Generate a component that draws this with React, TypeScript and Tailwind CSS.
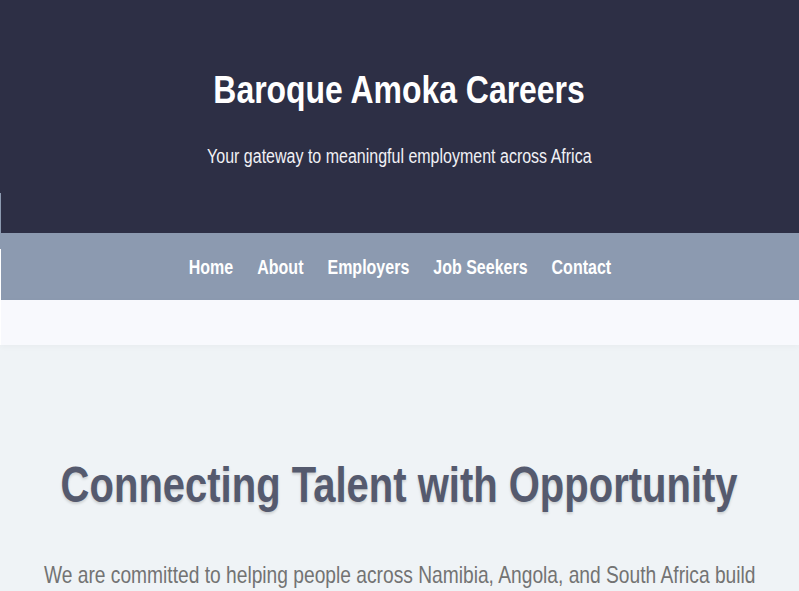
export default function App() {
  const nav = ["Home", "About", "Employers", "Job Seekers", "Contact"];
  return (
    <div
      className="relative min-h-[591px] overflow-hidden bg-[#eff3f6]"
      style={{ fontFamily: '"Liberation Sans", Arial, sans-serif' }}
    >
      <header className="h-[233px] bg-[#2d2f45] text-white flex flex-col items-center pt-[66px]">
        <h1 className="inline-block whitespace-nowrap scale-x-[0.84] text-[38px] font-bold leading-[48px]">
          Baroque Amoka Careers
        </h1>
        <p className="inline-block whitespace-nowrap scale-x-[0.8] mt-[30px] text-[20px] leading-[24px] text-[#f1f1f5]">
          Your gateway to meaningful employment across Africa
        </p>
      </header>
      <nav className="h-[67px] bg-[#8c9ab0] flex items-center justify-center">
        <div className="inline-flex whitespace-nowrap gap-[30px] scale-x-[0.8]">
          {nav.map((n) => (
            <a key={n} className="text-white font-bold text-[20px] leading-[24px]">
              {n}
            </a>
          ))}
        </div>
      </nav>
      <div className="h-[45px] bg-[#f8f9fd] shadow-[0_2px_6px_rgba(0,0,0,0.03)]" />
      <section className="flex flex-col items-center pt-[112px]">
        <h2 className="inline-block whitespace-nowrap scale-x-[0.8] text-[50px] font-bold leading-[56px] text-[#555a6e] [text-shadow:0_2px_3px_rgba(0,0,0,0.15)]">
          Connecting Talent with Opportunity
        </h2>
        <p className="inline-block whitespace-nowrap scale-x-[0.8] mt-[47px] text-[24px] leading-[30px] text-[#737373]">
          We are committed to helping people across Namibia, Angola, and South Africa build
        </p>
      </section>
      <div className="absolute left-0 top-[193px] h-[40px] w-px bg-[#8c9ab0]" />
      <div className="absolute left-0 top-[249px] h-[96px] w-px bg-white" />
    </div>
  );
}
